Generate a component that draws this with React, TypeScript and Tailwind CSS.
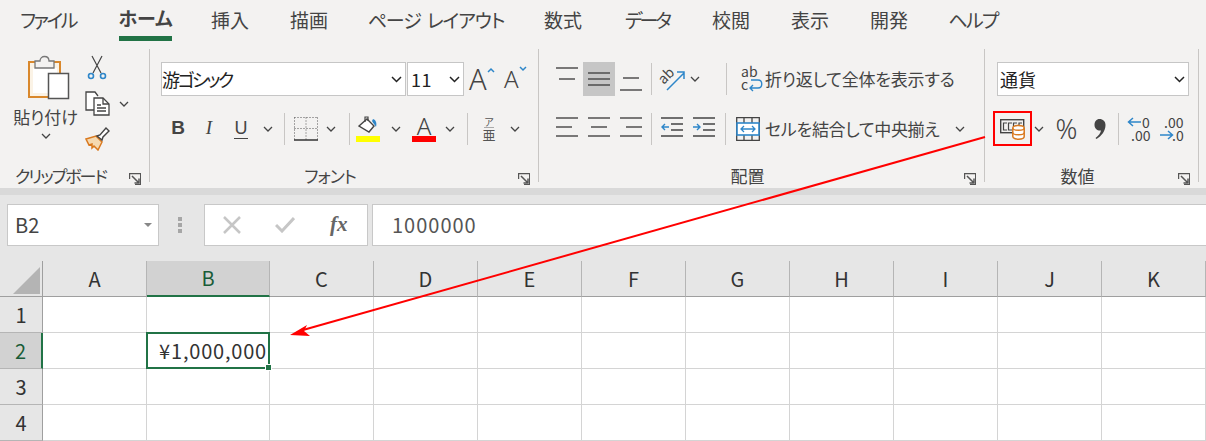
import React from 'react';

const tabs = [
  { label: 'ファイル', cls: 'w-[56px] ml-[20px] tracking-[-2.5px]' },
  { label: 'ホーム', cls: 'w-[53px] ml-[43px] font-bold border-b-[5px] border-[#217346]' },
  { label: '挿入', cls: 'w-[38px] ml-[39px]' },
  { label: '描画', cls: 'w-[38px] ml-[41px]' },
  { label: 'ページ レイアウト', cls: 'w-[130px] ml-[43px] tracking-[-1.1px] [word-spacing:3px]' },
  { label: '数式', cls: 'w-[38px] ml-[43px]' },
  { label: 'データ', cls: 'w-[46px] ml-[42px] tracking-[-3px]' },
  { label: '校閲', cls: 'w-[38px] ml-[42px]' },
  { label: '表示', cls: 'w-[38px] ml-[41px]' },
  { label: '開発', cls: 'w-[38px] ml-[41px]' },
  { label: 'ヘルプ', cls: 'w-[48px] ml-[41px] tracking-[-1.7px]' },
];

const columns = ['A', 'B', 'C', 'D', 'E', 'F', 'G', 'H', 'I', 'J', 'K'];
const rows = [1, 2, 3, 4];

const Chevron = () => (
  <svg width="10" height="6" viewBox="0 0 10 6" fill="none" stroke="#444" strokeWidth="1.3">
    <path d="M1 1l4 4 4-4" />
  </svg>
);

const Sep = ({ className = '' }: { className?: string }) => (
  <div className={`h-[32px] w-px shrink-0 bg-[#c8c6c4] ${className}`} />
);

const Launcher = () => (
  <svg width="12" height="12" viewBox="0 0 12 12" fill="none" stroke="#555" strokeWidth="1.2">
    <path d="M.6 6V.6h11v11H6" />
    <path d="M3 3l7 7M10 5.5V10H5.5" strokeWidth="1.5" />
  </svg>
);

const Lines = ({ lines, w = 22, h = 24 }: { lines: number[][]; w?: number; h?: number }) => (
  <svg width={w} height={h} viewBox={`0 0 ${w} ${h}`} stroke="#444" strokeWidth="1.4">
    {lines.map((l, i) => (
      <line key={i} x1={l[0]} x2={l[1]} y1={l[2]} y2={l[2]} />
    ))}
  </svg>
);

const Group = ({
  label,
  labelClass = '',
  className,
  children,
}: {
  label: string;
  labelClass?: string;
  className: string;
  children: React.ReactNode;
}) => (
  <div className={`flex h-[133px] shrink-0 flex-col border-r border-[#c8c6c4] ${className}`}>
    <div className="h-[97px] shrink-0">{children}</div>
    <div className="mt-[18px] flex h-[24px] shrink-0 items-center">
      <div className={`flex-1 text-center text-[#444] text-[17px] leading-[24px] ${labelClass}`}>{label}</div>
      <div className="flex w-[28px] justify-center pt-[6px]"><Launcher /></div>
    </div>
  </div>
);

const Select = ({ text, className }: { text: string; className: string }) => (
  <div className={`flex h-[34px] shrink-0 items-center justify-between border border-[#c6c6c6] bg-white text-[#222] text-[18px] ${className}`}>
    <span>{text}</span>
    <svg width="11" height="7" viewBox="0 0 11 7" fill="none" stroke="#222" strokeWidth="1.5" className="mr-[3px]">
      <path d="M1 1l4.500 4.500L10 1" />
    </svg>
  </div>
);

const Row1 = ({ children }: { children: React.ReactNode }) => (
  <div className="mt-[13px] flex h-[34px] items-center">{children}</div>
);
const Row2 = ({ children }: { children: React.ReactNode }) => (
  <div className="mt-[15px] flex h-[35px] items-center">{children}</div>
);

const Clipboard = () => (
  <div className="flex">
    <div className="flex w-[85px] flex-col items-center pt-[6px]">
      <svg width="42" height="45" viewBox="0 0 42 45" className="ml-[12px]">
        <rect x="1" y="7" width="31" height="35" fill="#fbf3e6" stroke="#d9882c" strokeWidth="2" />
        <rect x="5" y="13" width="24" height="25" fill="#fff" />
        <path d="M7 13V6h5c0-6 9-6 9 0h5v7z" fill="#f3f2f1" stroke="#777" strokeWidth="1.3" />
        <rect x="20.500" y="18.500" width="20" height="25" fill="#fff" stroke="#555" strokeWidth="1.500" />
      </svg>
      <div className="mt-[5px] ml-[6px] text-[17px] leading-[24px] text-[#444]">貼り付け</div>
      <div className="mt-[4px] ml-[6px]"><Chevron /></div>
    </div>
    <div className="flex flex-col pt-[6px]">
      <svg width="26" height="26" viewBox="0 0 26 26" fill="none" className="ml-[-1px]">
        <path d="M8 1l9 17M18 1L9 18" stroke="#444" strokeWidth="1.200" />
        <circle cx="7" cy="21" r="2.500" stroke="#2e86c9" strokeWidth="1.600" />
        <circle cx="19" cy="21" r="2.500" stroke="#2e86c9" strokeWidth="1.600" />
      </svg>
      <div className="mt-[10px] flex items-center">
        <svg width="26" height="25" viewBox="0 0 26 25" fill="none" stroke="#444" strokeWidth="1.300">
          <path d="M9 19H1V1h9l3 4" fill="#fff" />
          <path d="M9 7h9l6 6v11H9z" fill="#fff" />
          <path d="M18 7v6h6M12 14h4M12 17h9M12 20h9" />
        </svg>
        <div className="ml-[8px]"><Chevron /></div>
      </div>
      <svg width="26" height="24" viewBox="0 0 26 24" fill="none" className="mt-[11px]">
        <path d="M1 12l10-3 6 6-4 8-4-4-2 2 0-4-3 1z" fill="#f5d9b0" stroke="#d9791f" strokeWidth="1.500" />
        <path d="M12 9l3-1 6-7 3 3-6 6-1 3z" fill="#fff" stroke="#444" strokeWidth="1.400" />
      </svg>
    </div>
  </div>
);

const Font = () => (
  <>
    <Row1>
      <Select text="游ゴシック" className="ml-[11px] w-[245px] tracking-[-2.400px]" />
      <Select text="11" className="ml-[1px] w-[57px] pl-[3px] tracking-[0.5px]" />
      <div className="ml-[5px] flex w-[26px] items-start">
        <span className="font-['Noto_Sans',sans-serif] text-[29px] font-light leading-[30px] text-[#444]">A</span>
        <svg width="8" height="6" viewBox="0 0 8 6" fill="none" stroke="#2e86c9" strokeWidth="1.500" className="mt-[3px]">
          <path d="M1 5l3-3 3 3" />
        </svg>
      </div>
      <div className="ml-[9px] flex w-[24px] items-start">
        <span className="font-['Noto_Sans',sans-serif] text-[24px] font-light leading-[30px] text-[#444]">A</span>
        <svg width="8" height="6" viewBox="0 0 8 6" fill="none" stroke="#2e86c9" strokeWidth="1.500" className="mt-[2px]">
          <path d="M1 1l3 3 3-3" />
        </svg>
      </div>
    </Row1>
    <Row2>
      <span className="ml-[21px] w-[14px] text-center font-['Liberation_Sans',sans-serif] text-[19px] font-bold text-[#444]">B</span>
      <span className="ml-[17px] w-[14px] text-center font-['Liberation_Serif',serif] text-[19px] italic text-[#444]">I</span>
      <span className="ml-[18px] w-[14px] border-b-[1.500px] border-[#444] text-center font-['Liberation_Sans',sans-serif] text-[18px] leading-[20px] text-[#444]">U</span>
      <div className="ml-[15px]"><Chevron /></div>
      <Sep className="ml-[11px]" />
      <svg width="24" height="24" viewBox="0 0 24 24" fill="none" stroke="#555" className="ml-[9px]">
        <path d="M.5 .5h23M.5 11.500h23M.5 .5v22M12 .5v22M23.500 .5v22" strokeDasharray="1 2" />
        <path d="M0 23h24" strokeWidth="1.500" stroke="#333" />
      </svg>
      <div className="ml-[8px]"><Chevron /></div>
      <Sep className="ml-[13px]" />
      <div className="ml-[6px] flex w-[24px] flex-col items-center">
        <svg width="20" height="20" viewBox="0 0 20 20" fill="none">
          <path d="M1 10l8-7 7 7-5 6z" fill="#fff" stroke="#444" strokeWidth="1.400" />
          <path d="M7 6V1h3v4" stroke="#444" strokeWidth="1.200" />
          <path d="M15 3c3 1 4 4 3 8-1-2-3-4-4-6z" fill="#2e86c9" />
        </svg>
        <div className="h-[6px] w-[24px] bg-[#ffff00]" />
      </div>
      <div className="ml-[11px]"><Chevron /></div>
      <div className="ml-[11px] flex w-[24px] flex-col items-center">
        <span className="font-['Noto_Sans',sans-serif] text-[24px] font-light leading-[20px] text-[#444]">A</span>
        <div className="h-[6px] w-[24px] bg-[#ff0000]" />
      </div>
      <div className="ml-[9px]"><Chevron /></div>
      <Sep className="ml-[12px]" />
      <div className="ml-[14px] flex w-[14px] flex-col items-center text-[#555]">
        <span className="border-b border-[#aaa] text-[10px] leading-[11px]">ア</span>
        <span className="text-[13px] leading-[14px]">亜</span>
      </div>
      <div className="ml-[14px]"><Chevron /></div>
    </Row2>
  </>
);

const Align = () => (
  <>
    <Row1>
      <div className="ml-[17px]"><Lines lines={[[0, 22, 1], [3, 19, 12]]} /></div>
      <div className="ml-[5px] flex h-[34px] w-[32px] items-center justify-center bg-[#c6c6c6]">
        <Lines lines={[[0, 22, 6], [0, 22, 12], [0, 22, 18]]} />
      </div>
      <div className="ml-[5px]"><Lines lines={[[3, 19, 11], [0, 22, 23]]} /></div>
      <Sep className="ml-[9px]" />
      <svg width="26" height="26" viewBox="0 0 26 26" fill="none" className="ml-[8px] overflow-visible">
        <text x="0" y="14" fontSize="14" fill="#444" transform="rotate(-45 8 12)">ab</text>
        <path d="M7 24L24 7M17 6h7v7" stroke="#2e86c9" strokeWidth="1.500" />
      </svg>
      <div className="ml-[4px]"><Chevron /></div>
      <Sep className="ml-[26px]" />
      <svg width="24" height="28" viewBox="0 0 24 28" fill="none" className="ml-[13px] overflow-visible">
        <text x="1" y="12" fontSize="14" fill="#444">ab</text>
        <text x="1" y="25" fontSize="14" fill="#444">c</text>
        <path d="M10 23h8c5 0 5-8 0-8h-7M13 20l-3 3 3 3" stroke="#2e86c9" strokeWidth="1.400" />
      </svg>
      <span className="ml-[1px] whitespace-nowrap text-[17px] tracking-[-0.2px] text-[#444]">折り返して全体を表示する</span>
    </Row1>
    <Row2>
      <div className="ml-[17px]"><Lines lines={[[0, 22, 1], [0, 16, 10], [0, 22, 19]]} /></div>
      <div className="ml-[10px]"><Lines lines={[[0, 22, 1], [3, 19, 10], [0, 22, 19]]} /></div>
      <div className="ml-[10px]"><Lines lines={[[0, 22, 1], [6, 22, 10], [0, 22, 19]]} /></div>
      <Sep className="ml-[9px]" />
      <svg width="22" height="24" viewBox="0 0 22 24" fill="none" stroke="#444" strokeWidth="1.400" className="ml-[9px]">
        <path d="M0 1h22M10 7h12M10 13h12M0 19h22" />
        <path d="M8 10H1M4 7l-3 3 3 3" stroke="#2e86c9" />
      </svg>
      <svg width="22" height="24" viewBox="0 0 22 24" fill="none" stroke="#444" strokeWidth="1.400" className="ml-[10px]">
        <path d="M0 1h22M10 7h12M10 13h12M0 19h22" />
        <path d="M0 10h7M4 7l3 3-3 3" stroke="#2e86c9" />
      </svg>
      <Sep className="ml-[10px]" />
      <svg width="24" height="24" viewBox="0 0 24 24" fill="none" className="ml-[10px]">
        <path d="M.7 .7h22.600v22.600H.7zM8 0v6M16 0v6M8 18v6M16 18v6" stroke="#444" strokeWidth="1.300" />
        <rect x="1" y="6" width="22" height="12" fill="#fff" stroke="#2e86c9" strokeWidth="1.600" />
        <path d="M5 12h14M8 9l-3 3 3 3M16 9l3 3-3 3" stroke="#2e86c9" strokeWidth="1.300" />
      </svg>
      <span className="ml-[5px] whitespace-nowrap text-[17px] tracking-[-0.3px] text-[#444]">セルを結合して中央揃え</span>
      <div className="ml-[16px]"><Chevron /></div>
    </Row2>
  </>
);

const NumberGroup = () => (
  <>
    <Row1>
      <Select text="通貨" className="ml-[12px] w-[192px] pl-[2px]" />
    </Row1>
    <Row2>
      <div className="ml-[8px] flex h-[35px] w-[39px] items-center justify-center border-[2px] border-[#ff0000]">
        <svg width="25" height="22" viewBox="0 0 25 22" fill="none">
          <rect x=".7" y="1.700" width="23" height="13" stroke="#444" strokeWidth="1.400" />
          <path d="M7 5H3.500v7H7M12 5H8.500v7H12M17 5h-3.500v7H17M22 5h-3v4" stroke="#444" strokeWidth="1.200" />
          <path d="M12.800 10c0-3.500 11.400-3.500 11.400 0v8.500c0 3.500-11.400 3.500-11.400 0z" fill="#fff" stroke="#d9791f" strokeWidth="1.500" />
          <path d="M12.800 10c0 3 11.400 3 11.400 0M12.800 14.500c0 3 11.400 3 11.400 0" stroke="#d9791f" strokeWidth="1.300" />
        </svg>
      </div>
      <div className="ml-[2px]"><Chevron /></div>
      <span className="ml-[11px] w-[23px] text-center font-['Noto_Sans',sans-serif] text-[27px] font-light leading-[30px] text-[#444]">%</span>
      <svg width="12" height="22" viewBox="0 0 12 22" className="ml-[16px]">
        <path d="M5.500 1C9 1 11.500 3.500 11.500 7c0 6-4 11-9 14l-1-1c3-2 5-5 5.500-7.500C3.500 13 .5 10.500.5 7 .5 3.500 2.500 1 5.500 1z" fill="#444" />
      </svg>
      <Sep className="ml-[12px]" />
      <svg width="24" height="26" viewBox="0 0 24 26" fill="none" className="ml-[8px] overflow-visible">
        <path d="M14 6H2M6 2L1.500 6 6 10" stroke="#2e86c9" strokeWidth="1.500" />
        <text x="15" y="12" fontSize="14" fill="#444">0</text>
        <text x="4" y="25" fontSize="14" fill="#444">.00</text>
      </svg>
      <svg width="24" height="26" viewBox="0 0 24 26" fill="none" className="ml-[8px] overflow-visible">
        <text x="5" y="12" fontSize="14" fill="#444">.00</text>
        <path d="M1 19h12M9 15l4.500 4L9 23" stroke="#2e86c9" strokeWidth="1.500" />
        <text x="13" y="25" fontSize="14" fill="#444">.0</text>
      </svg>
    </Row2>
  </>
);

const FormulaBar = () => (
  <div className="flex h-[66px] bg-[#e6e6e6] pt-[9px]">
    <div className="ml-[7px] flex h-[42px] w-[152px] items-center justify-between border border-[#c8c8c8] bg-white pl-[7px] pr-[6px] text-[20px] text-[#444]">
      <span>B2</span>
      <div className="h-0 w-0 border-x-[4px] border-t-[4px] border-x-transparent border-t-[#888]" />
    </div>
    <div className="flex h-[42px] w-[45px] flex-col items-center justify-center gap-[2px] pr-[3px]">
      <div className="h-[4px] w-[4px] bg-[#a6a6a6]" />
      <div className="h-[4px] w-[4px] bg-[#a6a6a6]" />
      <div className="h-[4px] w-[4px] bg-[#a6a6a6]" />
    </div>
    <div className="flex h-[42px] w-[164px] items-center border border-[#c8c8c8] bg-white">
      <svg width="18" height="18" viewBox="0 0 18 18" fill="none" stroke="#c6c6c6" strokeWidth="2.500" className="ml-[18px]">
        <path d="M1 1l16 16M17 1L1 17" />
      </svg>
      <svg width="20" height="16" viewBox="0 0 20 16" fill="none" stroke="#c6c6c6" strokeWidth="3" className="ml-[34px]">
        <path d="M1 8l6 6L19 1" />
      </svg>
      <span className="ml-[35px] font-['Liberation_Serif',serif] text-[21px] font-bold italic text-[#666]">fx</span>
    </div>
    <div className="ml-[4px] flex h-[42px] flex-1 items-center border border-r-0 border-[#c8c8c8] bg-white pl-[19px] text-[20px] tracking-[1px] text-[#555]">
      1000000
    </div>
  </div>
);

const Sheet = () => (
  <div className="grid grid-cols-[43px_104px_123px_104px_104px_104px_104px_104px_104px_104px_104px_104px] grid-rows-[36px_36px_36px_36px_36px] text-[20px] text-[#333]">
    <div className="flex items-end justify-end border-r border-b border-[#9f9f9f] bg-[#e6e6e6] pb-[2px] pr-[2px]">
      <div className="h-0 w-0 border-b-[27px] border-l-[27px] border-b-[#b4b4b4] border-l-transparent" />
    </div>
    {columns.map((c) => (
      <div
        key={c}
        className={
          c === 'B'
            ? 'flex items-center justify-center border-r border-b-[2px] border-r-[#b5b5b5] border-b-[#217346] bg-[#d2d2d2] text-[#1a5c38]'
            : 'flex items-center justify-center border-r border-b border-r-[#b5b5b5] border-b-[#9f9f9f] bg-[#e6e6e6]'
        }
      >
        {c}
      </div>
    ))}
    {rows.map((r) => (
      <React.Fragment key={r}>
        <div
          className={
            r === 2
              ? 'flex items-center justify-center border-r-[2px] border-b border-r-[#217346] border-b-[#b5b5b5] bg-[#d2d2d2] text-[#1a5c38]'
              : 'flex items-center justify-center border-r border-b border-r-[#9f9f9f] border-b-[#b5b5b5] bg-[#e6e6e6]'
          }
        >
          {r}
        </div>
        {columns.map((c) => (
          <div key={c} className="relative border-r border-b border-[#d4d4d4] bg-white">
            {r === 2 && c === 'B' && (
              <div className="absolute inset-[-1px] z-10 flex items-center justify-end border-[2px] border-[#217346] pr-[1px] tracking-[0.8px]">
                <span>¥1,000,000</span>
                <div className="absolute right-[-4px] bottom-[-4px] h-[7px] w-[7px] border border-white bg-[#217346]" />
              </div>
            )}
          </div>
        ))}
      </React.Fragment>
    ))}
  </div>
);

export default function App() {
  return (
    <div className="relative h-[441px] w-[1206px] overflow-hidden bg-white font-['Noto_Sans_CJK_JP',sans-serif] [font-feature-settings:'palt']">
      <div className="flex h-[49px] items-start bg-[#f3f2f1] text-[19px] text-[#444]">
        {tabs.map((t) => (
          <div key={t.label} className={`flex h-[41px] shrink-0 items-center justify-center whitespace-nowrap ${t.cls}`}>
            {t.label}
          </div>
        ))}
      </div>
      <div className="flex h-[139px] bg-[#f3f2f1]">
        <Group label="クリップボード" labelClass="tracking-[-2px]" className="w-[150px]"><Clipboard /></Group>
        <Group label="フォント" labelClass="tracking-[-1px]" className="w-[389px]"><Font /></Group>
        <Group label="配置" className="w-[446px]"><Align /></Group>
        <Group label="数値" className="w-[214px]"><NumberGroup /></Group>
      </div>
      <div className="h-[7px] bg-[#d9d9d9]" />
      <FormulaBar />
      <Sheet />
      <svg width="1206" height="441" viewBox="0 0 1206 441" className="pointer-events-none absolute inset-0 z-20">
        <path d="M985 137L303 330" stroke="#ff0000" strokeWidth="2" />
        <path d="M290 335l17-10-3 6 6 5z" fill="#ff0000" />
      </svg>
    </div>
  );
}
